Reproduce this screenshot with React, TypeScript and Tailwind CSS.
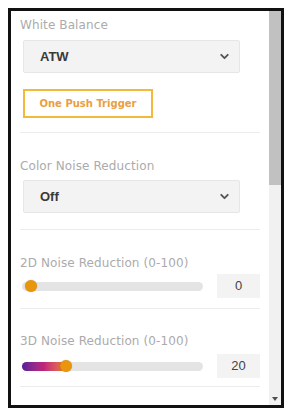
import { ChevronDown } from "lucide-react";

function Label({ children }: { children: React.ReactNode }) {
  return (
    <div className="h-4 text-[12px] leading-4 text-[#ababab] font-['DejaVu_Sans',sans-serif] tracking-[0.1px]">
      {children}
    </div>
  );
}

function Select({ value }: { value: string }) {
  return (
    <div className="ml-[3px] w-[217px] h-[33px] flex items-center justify-between pl-4 pr-2 bg-[#f3f3f3] border border-[#e6e6e6] rounded-[2px]">
      <span className="text-[13px] font-bold text-[#3a3a3a] font-['Liberation_Sans',sans-serif]">
        {value}
      </span>
      <ChevronDown className="size-[13px] text-[#555]" strokeWidth={3.5} />
    </div>
  );
}

function Slider({ value, pos, gradient }: { value: number; pos: number; gradient?: boolean }) {
  return (
    <div className="flex items-center">
      <div className="relative ml-[2px] w-[181px] h-[9px] rounded-full bg-[#e4e4e4]">
        {gradient && (
          <div
            className="absolute left-0 top-0 h-full rounded-full bg-gradient-to-r from-[#5b1a9a] via-[#c0237a] to-[#f07a1a]"
            style={{ width: pos }}
          />
        )}
        <div
          className="absolute top-1/2 size-[12px] -translate-x-1/2 -translate-y-1/2 rounded-full bg-[#e9960c] shadow-[0_0_1px_rgba(0,0,0,0.3)]"
          style={{ left: pos }}
        />
      </div>
      <div className="ml-[14px] w-[43px] h-[24px] flex items-center justify-center bg-[#f3f3f3] text-[13px] text-[#444] font-['Liberation_Sans',sans-serif]">
        {value}
      </div>
    </div>
  );
}

function Sep() {
  return <div className="h-px w-[240px] bg-[#ececec]" />;
}

export default function App() {
  return (
    <div className="w-[287px] h-[409px] bg-white pt-2 pl-2">
      <div className="w-[276px] h-[400px] border-[3px] border-[#111] flex bg-white">
        <div className="flex-1 pl-[9px] flex flex-col">
          <div className="mt-[6px]">
            <Label>White Balance</Label>
          </div>
          <div className="mt-[7px]">
            <Select value="ATW" />
          </div>
          <div className="mt-4 ml-[3px] w-[130px] h-[29px] flex items-center justify-center border-2 border-[#f2b93a] text-[10px] font-bold text-[#e9a040] font-['DejaVu_Sans',sans-serif]">
            One Push Trigger
          </div>
          <div className="mt-[14px]">
            <Sep />
          </div>

          <div className="mt-[25px]">
            <Label>Color Noise Reduction</Label>
          </div>
          <div className="mt-[6px]">
            <Select value="Off" />
          </div>
          <div className="mt-4">
            <Sep />
          </div>

          <div className="mt-[25px]">
            <Label>2D Noise Reduction (0-100)</Label>
          </div>
          <div className="mt-[3px]">
            <Slider value={0} pos={9} />
          </div>
          <div className="mt-[10px]">
            <Sep />
          </div>

          <div className="mt-[24px]">
            <Label>3D Noise Reduction (0-100)</Label>
          </div>
          <div className="mt-[5px]">
            <Slider value={20} pos={44} gradient />
          </div>
          <div className="mt-[8px]">
            <Sep />
          </div>
        </div>
        <div className="w-3 bg-[#f1f1f1] flex flex-col justify-between">
          <div className="h-[174px] bg-[#c1c1c1]" />
          <div className="flex justify-center pb-[4px]">
            <div className="w-0 h-0 border-l-[3px] border-r-[3px] border-t-[4px] border-l-transparent border-r-transparent border-t-[#505050]" />
          </div>
        </div>
      </div>
    </div>
  );
}
